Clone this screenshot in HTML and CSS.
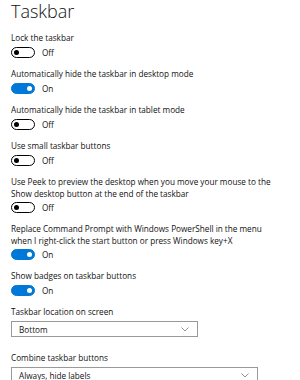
FILE: index.html
```html
<!DOCTYPE html>
<html lang="en">
<head>
    <meta charset="UTF-8">
    <title>Taskbar</title>
    <link rel="stylesheet" href="styles.css">
</head>
<body>
    <h1>Taskbar</h1>

    <div class="setting">
        <p class="label">Lock the taskbar</p>
        <div class="switch-row"><span class="switch"></span><span>Off</span></div>
    </div>
    <div class="setting">
        <p class="label">Automatically hide the taskbar in desktop mode</p>
        <div class="switch-row"><span class="switch on"></span><span>On</span></div>
    </div>
    <div class="setting">
        <p class="label">Automatically hide the taskbar in tablet mode</p>
        <div class="switch-row"><span class="switch"></span><span>Off</span></div>
    </div>
    <div class="setting">
        <p class="label">Use small taskbar buttons</p>
        <div class="switch-row"><span class="switch"></span><span>Off</span></div>
    </div>
    <div class="setting tall">
        <p class="label">Use Peek to preview the desktop when you move your mouse to the<br>Show desktop button at the end of the taskbar</p>
        <div class="switch-row"><span class="switch"></span><span>Off</span></div>
    </div>
    <div class="setting tall">
        <p class="label">Replace Command Prompt with Windows PowerShell in the menu<br>when I right-click the start button or press Windows key+X</p>
        <div class="switch-row"><span class="switch on"></span><span>On</span></div>
    </div>
    <div class="setting">
        <p class="label">Show badges on taskbar buttons</p>
        <div class="switch-row"><span class="switch on"></span><span>On</span></div>
    </div>

    <div class="field">
        <p class="label">Taskbar location on screen</p>
        <div class="select short">
            <span>Bottom</span>
            <svg width="8" height="5" viewBox="0 0 8 5"><path d="M0.5 0.5 L4 4 L7.5 0.5" fill="none" stroke="#777" stroke-width="0.8"/></svg>
        </div>
    </div>
    <div class="field">
        <p class="label">Combine taskbar buttons</p>
        <div class="select long">
            <span>Always, hide labels</span>
            <svg width="8" height="5" viewBox="0 0 8 5"><path d="M0.5 0.5 L4 4 L7.5 0.5" fill="none" stroke="#777" stroke-width="0.8"/></svg>
        </div>
    </div>
</body>
</html>
```

FILE: styles.css
```css
body {
    font-family: "Open Sans", "Noto Sans", sans-serif;
    font-size: 8.2px;
    color: #111;
    background: #fff;
    margin: 0;
    padding: 0 11px;
}
h1 {
    font-family: "Open Sans", sans-serif;
    font-weight: 300;
    font-size: 18px;
    line-height: 22px;
    margin: 0 0 10px;
}
p {
    margin: 0;
}
.label {
    line-height: 12px;
}
.setting {
    margin-bottom: 10px;
}
.switch-row {
    display: flex;
    align-items: center;
    gap: 7px;
    margin-top: 3px;
    height: 11px;
}
.tall .switch-row {
    margin-top: 2px;
}
.switch {
    box-sizing: border-box;
    width: 24px;
    height: 11px;
    border: 1.5px solid #000;
    border-radius: 6px;
    display: flex;
    align-items: center;
    padding: 0 2px;
}
.switch::after {
    content: "";
    width: 5px;
    height: 5px;
    border-radius: 50%;
    background: #000;
}
.switch.on {
    background: #0078d7;
    border-color: #0078d7;
    justify-content: flex-end;
}
.switch.on::after {
    background: #fff;
}
.field {
    margin-top: 4px;
}
.field + .field {
    margin-top: 15px;
}
.field .label {
    margin-bottom: 3px;
}
.select {
    box-sizing: border-box;
    height: 16px;
    border: 1.5px solid #999;
    display: flex;
    align-items: center;
    justify-content: space-between;
    padding: 0 8px 0 7px;
}
.select.short {
    width: 187px;
}
.select.long {
    width: 247px;
}
```
